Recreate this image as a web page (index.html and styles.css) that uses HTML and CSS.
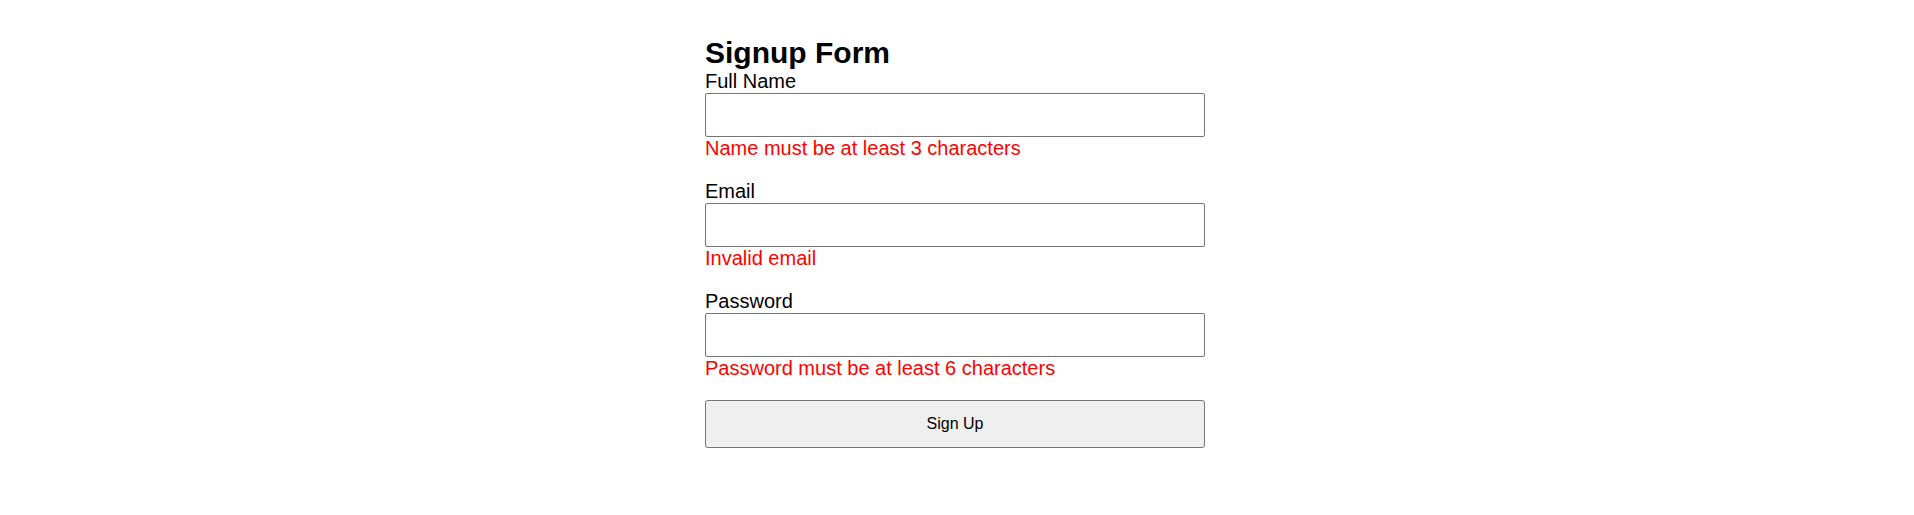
FILE: index.html
```html
<!DOCTYPE html>
<html lang="en">
<head>
<meta charset="utf-8">
<title>Signup Form</title>
<link rel="stylesheet" href="styles.css">
</head>
<body>
  <div class="page">
    <form class="signup" novalidate>
      <h2 class="title">Signup Form</h2>
      <div class="field">
        <label class="label" for="name">Full Name</label>
        <input class="input" id="name" type="text">
        <div class="error">Name must be at least 3 characters</div>
      </div>
      <div class="field">
        <label class="label" for="email">Email</label>
        <input class="input" id="email" type="email">
        <div class="error">Invalid email</div>
      </div>
      <div class="field">
        <label class="label" for="password">Password</label>
        <input class="input" id="password" type="password">
        <div class="error">Password must be at least 6 characters</div>
      </div>
      <button class="submit" type="submit">Sign Up</button>
    </form>
  </div>
</body>
</html>
```

FILE: styles.css
```css
html, body {
  margin: 0;
  padding: 0;
  background: #ffffff;
}

body {
  font-family: "Liberation Sans", Arial, sans-serif;
  color: #000000;
}

.page {
  display: flex;
  justify-content: center;
  padding: 36px 4px 0 0;
}

.signup {
  width: 500px;
  display: flex;
  flex-direction: column;
}

.title {
  margin: 0;
  font-size: 30px;
  font-weight: bold;
  line-height: normal;
}

.field {
  display: flex;
  flex-direction: column;
  margin-bottom: 20px;
}

.label {
  font-size: 20px;
  line-height: 23px;
}

.input {
  box-sizing: border-box;
  width: 100%;
  height: 44px;
  margin: 0;
  padding: 0 8px;
  border: 1px solid #767676;
  border-radius: 2px;
  background: #ffffff;
  font-family: "Liberation Sans", Arial, sans-serif;
  font-size: 16px;
}

.error {
  color: #ff0000;
  font-size: 20px;
  line-height: 23px;
}

.submit {
  box-sizing: border-box;
  width: 100%;
  height: 48px;
  margin: 0;
  padding: 0;
  border: 1px solid #767676;
  border-radius: 3px;
  background: #efefef;
  color: #000000;
  font-family: "Liberation Sans", Arial, sans-serif;
  font-size: 16px;
}
```
